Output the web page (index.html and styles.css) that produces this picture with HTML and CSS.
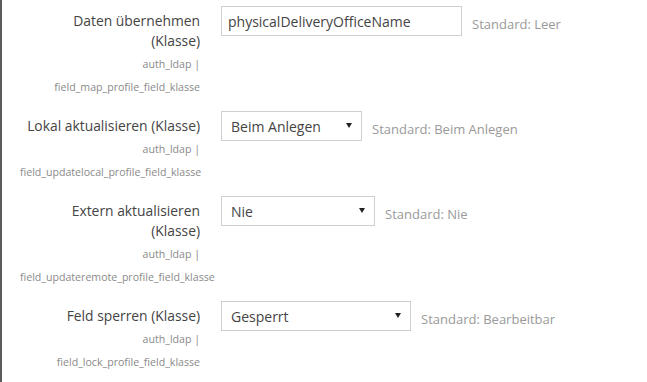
FILE: index.html
```html
<!DOCTYPE html>
<html lang="de">
<head>
    <meta charset="UTF-8">
    <title>LDAP Feldzuordnung</title>
    <link rel="stylesheet" href="styles.css">
</head>
<body>
    <div class="settings">
        <div class="row">
            <div class="label-col">
                <label class="label" for="map">Daten übernehmen<br>(Klasse)</label>
                <div class="shortname">auth_ldap | field_map_profile_field_klasse</div>
            </div>
            <div class="control">
                <input class="text-input" type="text" id="map" value="physicalDeliveryOfficeName">
                <span class="default">Standard: Leer</span>
            </div>
        </div>

        <div class="row">
            <div class="label-col">
                <label class="label" for="local">Lokal aktualisieren (Klasse)</label>
                <div class="shortname">auth_ldap | field_updatelocal_profile_field_klasse</div>
            </div>
            <div class="control">
                <div class="select-wrap w-local">
                    <select id="local">
                        <option>Beim Anlegen</option>
                    </select>
                </div>
                <span class="default">Standard: Beim Anlegen</span>
            </div>
        </div>

        <div class="row">
            <div class="label-col">
                <label class="label" for="remote">Extern aktualisieren<br>(Klasse)</label>
                <div class="shortname">auth_ldap | field_updateremote_profile_field_klasse</div>
            </div>
            <div class="control">
                <div class="select-wrap w-remote">
                    <select id="remote">
                        <option>Nie</option>
                    </select>
                </div>
                <span class="default">Standard: Nie</span>
            </div>
        </div>

        <div class="row last">
            <div class="label-col">
                <label class="label" for="lock">Feld sperren (Klasse)</label>
                <div class="shortname">auth_ldap | field_lock_profile_field_klasse</div>
            </div>
            <div class="control">
                <div class="select-wrap w-lock">
                    <select id="lock">
                        <option>Gesperrt</option>
                    </select>
                </div>
                <span class="default">Standard: Bearbeitbar</span>
            </div>
        </div>
    </div>
</body>
</html>
```

FILE: styles.css
```css
* {
    margin: 0;
    padding: 0;
    box-sizing: border-box;
}

html, body {
    height: 100%;
}

body {
    font-family: "Open Sans", Arial, sans-serif;
    background-color: #ffffff;
    color: #3f3f3f;
    border-left: 2px solid #5b5b5b;
    overflow: hidden;
}

.settings {
    padding-top: 6px;
}

.row {
    display: flex;
    align-items: flex-start;
    height: 105px;
}

.row:nth-child(2) {
    height: 85px;
}

.row.last {
    height: 75px;
}

.label-col {
    width: 180px;
    margin-left: 18px;
    margin-right: 21px;
    text-align: right;
    flex-shrink: 0;
}

.label {
    display: block;
    font-size: 13.85px;
    line-height: 20px;
    padding-top: 5px;
    color: #444444;
}

.shortname {
    font-size: 10.6px;
    line-height: 23px;
    margin-top: 2px;
    color: #8a8a8a;
}

.control {
    display: flex;
    align-items: flex-start;
}

.text-input {
    width: 241px;
    height: 30px;
    border: 1px solid #cfcfcf;
    padding: 0 6px;
    font-family: "Open Sans", Arial, sans-serif;
    font-size: 14px;
    color: #444444;
}

.select-wrap {
    position: relative;
    height: 30px;
}

.select-wrap select {
    appearance: none;
    -webkit-appearance: none;
    width: 100%;
    height: 30px;
    border: 1px solid #cfcfcf;
    border-radius: 0;
    background: #ffffff;
    padding: 0 9px;
    font-family: "Open Sans", Arial, sans-serif;
    font-size: 14px;
    color: #444444;
}

.select-wrap::after {
    content: "";
    position: absolute;
    right: 10px;
    top: 12px;
    border-left: 3px solid transparent;
    border-right: 3px solid transparent;
    border-top: 5px solid #222222;
}

.w-local {
    width: 141px;
}

.w-remote {
    width: 154px;
}

.w-lock {
    width: 190px;
}

.default {
    font-size: 13px;
    line-height: 20px;
    padding-top: 8px;
    margin-left: 10px;
    color: #9a9a9a;
}
```
